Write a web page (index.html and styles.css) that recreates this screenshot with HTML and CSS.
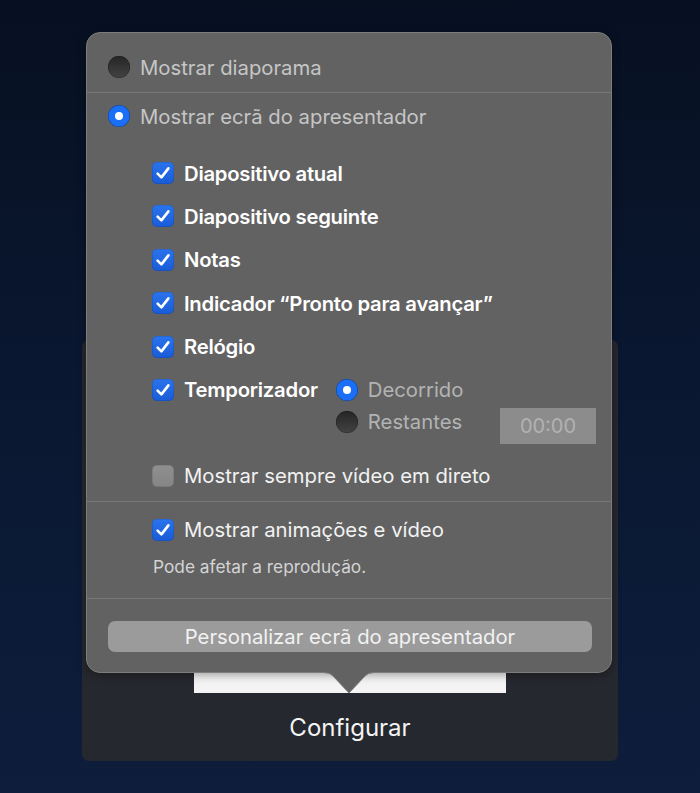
FILE: index.html
```html
<!DOCTYPE html>
<html lang="pt">
<head>
    <meta charset="UTF-8">
    <meta name="viewport" content="width=device-width, initial-scale=1.0">
    <title>Configurar</title>
    <link rel="stylesheet" href="styles.css">
</head>
<body>

    <div class="cena">

        <div class="painel">
            <div class="miniatura"></div>
            <div class="rotulo">Configurar</div>
        </div>

        <div class="popover">

            <div class="seccao s1">
                <div class="linha">
                    <span class="radio"></span>
                    <span class="texto apagado">Mostrar diaporama</span>
                </div>
            </div>

            <div class="seccao s2">
                <div class="linha">
                    <span class="radio ativo"></span>
                    <span class="texto apagado">Mostrar ecrã do apresentador</span>
                </div>

                <div class="opcoes">
                    <div class="linha item">
                        <span class="caixa marcada"><svg viewBox="0 0 22 22"><path d="M5.6 11.6 L9.4 15.4 L16.4 6.4"/></svg></span>
                        <span class="texto forte">Diapositivo atual</span>
                    </div>
                    <div class="linha item">
                        <span class="caixa marcada"><svg viewBox="0 0 22 22"><path d="M5.6 11.6 L9.4 15.4 L16.4 6.4"/></svg></span>
                        <span class="texto forte">Diapositivo seguinte</span>
                    </div>
                    <div class="linha item">
                        <span class="caixa marcada"><svg viewBox="0 0 22 22"><path d="M5.6 11.6 L9.4 15.4 L16.4 6.4"/></svg></span>
                        <span class="texto forte">Notas</span>
                    </div>
                    <div class="linha item">
                        <span class="caixa marcada"><svg viewBox="0 0 22 22"><path d="M5.6 11.6 L9.4 15.4 L16.4 6.4"/></svg></span>
                        <span class="texto forte">Indicador “Pronto para avançar”</span>
                    </div>
                    <div class="linha item">
                        <span class="caixa marcada"><svg viewBox="0 0 22 22"><path d="M5.6 11.6 L9.4 15.4 L16.4 6.4"/></svg></span>
                        <span class="texto forte">Relógio</span>
                    </div>

                    <div class="temporizador">
                        <div class="linha item">
                            <span class="caixa marcada"><svg viewBox="0 0 22 22"><path d="M5.6 11.6 L9.4 15.4 L16.4 6.4"/></svg></span>
                            <span class="texto forte">Temporizador</span>
                        </div>
                        <div class="modos">
                            <div class="linha">
                                <span class="radio ativo"></span>
                                <span class="texto cinza">Decorrido</span>
                            </div>
                            <div class="linha restantes">
                                <span class="radio"></span>
                                <span class="texto cinza">Restantes</span>
                                <span class="tempo">00:00</span>
                            </div>
                        </div>
                    </div>

                    <div class="linha item sempre">
                        <span class="caixa"></span>
                        <span class="texto">Mostrar sempre vídeo em direto</span>
                    </div>
                </div>
            </div>

            <div class="seccao s3">
                <div class="linha item">
                    <span class="caixa marcada"><svg viewBox="0 0 22 22"><path d="M5.6 11.6 L9.4 15.4 L16.4 6.4"/></svg></span>
                    <span class="texto">Mostrar animações e vídeo</span>
                </div>
                <p class="nota">Pode afetar a reprodução.</p>
            </div>

            <div class="seccao s4">
                <button class="botao">Personalizar ecrã do apresentador</button>
            </div>

            <svg class="seta" viewBox="0 0 50 23">
                <path class="fundo" d="M0 0 L0 1.5 Q6 1.5 9 5 L25 22 L41 5 Q44 1.5 50 1.5 L50 0 Z"/>
                <path class="borda" d="M0 1.5 Q6 1.5 9 5 L25 22 L41 5 Q44 1.5 50 1.5"/>
            </svg>
        </div>

    </div>

</body>
</html>
```

FILE: styles.css
```css
*{
    box-sizing: border-box;
}

body{
    margin: 0;
    height: 793px;
    overflow: hidden;
    font-family: Inter, "Noto Sans", sans-serif;
    background: linear-gradient(180deg, #071021 0%, #0a1730 45%, #0d1d3b 100%);
}

.cena{
    position: relative;
    width: 700px;
    height: 793px;
}

/* painel de trás */
.painel{
    margin-left: 82px;
    padding-top: 1px;
    width: 536px;
    height: 421px;
    position: relative;
    top: 340px;
    background-color: #26282f;
    border-radius: 7px;
}

.miniatura{
    margin: 32px 0 0 112px;
    width: 312px;
    height: 320px;
    background: linear-gradient(180deg, #e6e6e6, #f4f4f4);
}

.rotulo{
    margin-top: 17px;
    text-align: center;
    font-size: 24px;
    line-height: 36px;
    color: #f4f4f4;
}

/* popover */
.popover{
    position: absolute;
    top: 32px;
    left: 86px;
    width: 526px;
    height: 641px;
    background-color: #626262;
    border: 1px solid #7d7d7d;
    border-radius: 14px;
    box-shadow: 0 2px 10px rgba(0, 0, 0, 0.35);
}

.seccao{
    border-bottom: 1px solid #777;
}

.s1{
    padding: 23px 0 14px 21px;
    height: 60px;
}

.s2{
    padding: 12px 15px 14px 21px;
}

.s3{
    padding: 17px 15px 0 65px;
    height: 97px;
}

.s4{
    border-bottom: none;
    padding: 22px 19px 0 21px;
}

.linha{
    display: flex;
    align-items: center;
    height: 22px;
}

.texto{
    margin-left: 10px;
    font-size: 20.3px;
    color: #f2f2f2;
    white-space: nowrap;
}

.apagado{
    color: #c6c6c6;
}

.cinza{
    color: #b3b3b3;
}

.forte{
    font-weight: 600;
    letter-spacing: -0.25px;
    color: #fff;
}

.radio{
    flex: none;
    width: 22px;
    height: 22px;
    border-radius: 50%;
    background: linear-gradient(180deg, #252525, #434343);
    box-shadow: inset 0 0 0 0.5px rgba(0, 0, 0, 0.4);
}

.radio.ativo{
    background: #1a6ff6;
    display: flex;
    align-items: center;
    justify-content: center;
}

.radio.ativo::after{
    content: "";
    width: 8px;
    height: 8px;
    border-radius: 50%;
    background: #fff;
}

.caixa{
    flex: none;
    width: 22px;
    height: 22px;
    border-radius: 5px;
    background: linear-gradient(180deg, #8f8f8f, #858585);
    box-shadow: inset 0 0 0 0.5px rgba(0, 0, 0, 0.2);
}

.caixa.marcada{
    background: linear-gradient(180deg, #2a74ee, #1a5bd6);
}

.caixa svg{
    display: block;
    width: 22px;
    height: 22px;
    fill: none;
    stroke: #fff;
    stroke-width: 2.6;
    stroke-linecap: round;
    stroke-linejoin: round;
}

.opcoes{
    padding-left: 44px;
    margin-top: 35px;
}

.item + .item,
.item + .temporizador,
.temporizador + .item{
    margin-top: 21.4px;
}

.temporizador{
    display: flex;
    align-items: flex-start;
}

.modos{
    flex: 1;
    margin-left: 18px;
}

.restantes{
    margin-top: 10px;
}

.tempo{
    margin-left: auto;
    width: 96px;
    height: 36px;
    margin-top: 9px;
    background-color: #8c8c8c;
    color: #b2b2b2;
    font-size: 20px;
    line-height: 36px;
    text-align: center;
}

.sempre{
    margin-top: 32px !important;
}

.nota{
    margin: 17px 0 0 1px;
    font-size: 17.3px;
    line-height: 18px;
    color: #d4d4d4;
}

.botao{
    display: block;
    width: 100%;
    height: 31px;
    border: none;
    border-radius: 7px;
    background-color: #9b9b9b;
    color: #f2f2f2;
    font-family: inherit;
    font-size: 20.3px;
}

.seta{
    position: absolute;
    left: 237px;
    bottom: -22px;
    width: 50px;
    height: 23px;
    overflow: visible;
}

.seta .fundo{
    fill: #626262;
}

.seta .borda{
    fill: none;
    stroke: #7a7a7a;
    stroke-width: 1;
}
```
